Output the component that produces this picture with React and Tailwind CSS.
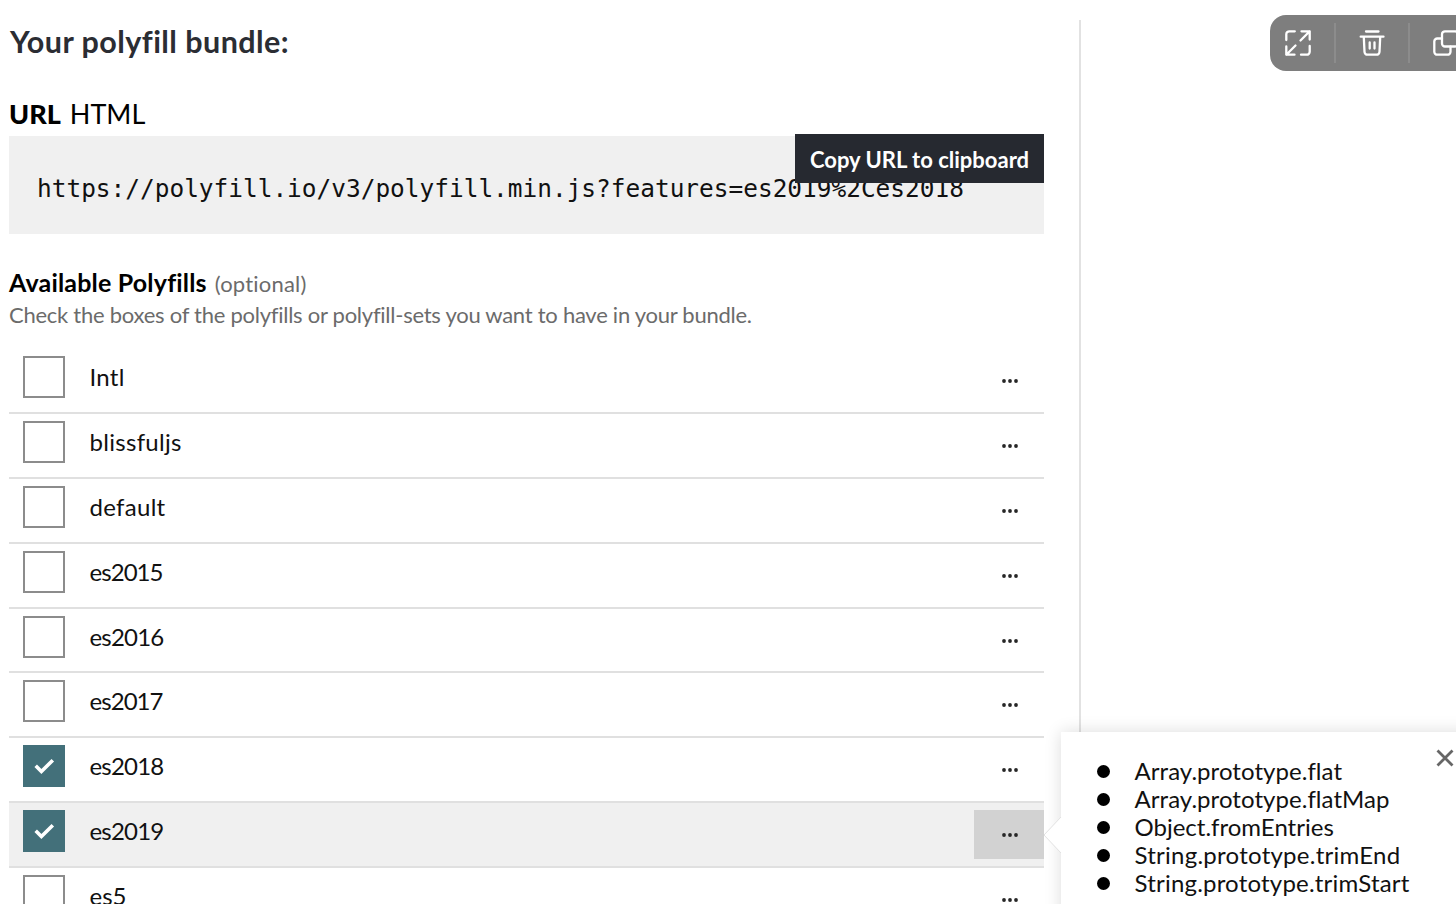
import React from "react";

const rows = [
  { name: "Intl", tracking: "tracking-[0.3px]" },
  { name: "blissfuljs", tracking: "tracking-[0.3px]" },
  { name: "default", tracking: "tracking-[0.3px]" },
  { name: "es2015", tracking: "tracking-[-0.95px]" },
  { name: "es2016", tracking: "tracking-[-0.8px]" },
  { name: "es2017", tracking: "tracking-[-0.95px]" },
  { name: "es2018", tracking: "tracking-[-0.8px]", checked: true },
  { name: "es2019", tracking: "tracking-[-0.8px]", checked: true, active: true },
  { name: "es5", tracking: "tracking-[0px]" },
];

const features = [
  { name: "Array.prototype.flat", tracking: "tracking-[0.05px]" },
  { name: "Array.prototype.flatMap", tracking: "tracking-[0.05px]" },
  { name: "Object.fromEntries", tracking: "tracking-[0px]" },
  { name: "String.prototype.trimEnd", tracking: "tracking-[0.25px]" },
  { name: "String.prototype.trimStart", tracking: "tracking-[0.2px]" },
];

function Checkbox({ checked }) {
  if (!checked) return <span className="block size-[42px] shrink-0 border-2 border-[#8c8c8c] bg-white" />;
  return (
    <span className="block size-[42px] shrink-0 bg-[#43707a]">
      <svg viewBox="0 0 42 42" className="size-full" fill="none" stroke="white" strokeWidth="3.6">
        <path d="M12.7 20.8 18.4 26.5 29.8 15.2" />
      </svg>
    </span>
  );
}

function Row({ name, tracking, checked, active }) {
  return (
    <li className={`flex h-[64.8px] shrink-0 items-start border-b-2 border-[#e0e0e0] pl-[14px] pt-[7px] ${active ? "bg-[#f0f0f0]" : ""}`}>
      <Checkbox checked={checked} />
      <span className={`ml-[24.5px] mt-[5px] text-[24px] leading-[32px] text-[#111] ${tracking}`}>{name}</span>
      <button className={`ml-auto flex h-[49px] w-[70px] items-center justify-center pl-[2px] pt-[1px] ${active ? "bg-[#d2d2d2]" : ""}`}>
        <svg width="18" height="6" viewBox="0 0 18 6" fill="#262626">
          <circle cx="3" cy="3" r="1.9" />
          <circle cx="9" cy="3" r="1.9" />
          <circle cx="15" cy="3" r="1.9" />
        </svg>
      </button>
    </li>
  );
}

function Toolbar() {
  return (
    <div className="absolute left-[1270px] top-[15px] flex h-[56px] w-[224px] items-center rounded-[16px] bg-[#7e7e7e]">
      <div className="flex w-[64px] justify-center pr-[8px]">
        <svg width="28" height="28" viewBox="0 0 28 28" fill="none" stroke="white" strokeWidth="2.3" strokeLinecap="round" strokeLinejoin="round">
          <path d="M2.300 11V5.300a3 3 0 0 1 3-3h5.500M25.700 17v5.700a3 3 0 0 1-3 3H17M17.500 2.300h8.200v8.200M25.700 2.300 16.500 11.500M10.500 25.700H2.300v-8.200M2.300 25.700l9.200-9.200" />
        </svg>
      </div>
      <div className="h-[40px] w-[2px] bg-[#8c8c8c]" />
      <div className="flex w-[72px] justify-center">
        <svg width="28" height="28" viewBox="0 0 28 28" fill="none" stroke="white" strokeWidth="2.3" strokeLinecap="round" strokeLinejoin="round">
          <path d="M8 2.500h12.500M2.700 7.700h22.800M5.800 8l.7 14.700a3 3 0 0 0 3 3h9a3 3 0 0 0 3-3l.7-14.700M11.700 13.500v6M16.500 13.500v6" />
        </svg>
      </div>
      <div className="h-[40px] w-[2px] bg-[#8c8c8c]" />
      <div className="flex w-[72px] justify-center">
        <svg width="28" height="28" viewBox="0 0 28 28" fill="none" stroke="white" strokeWidth="2.3" strokeLinecap="round" strokeLinejoin="round">
          <rect x="10" y="2.300" width="16" height="15.200" rx="3" />
          <path d="M10 9.500H5.300a3 3 0 0 0-3 3v10.200a3 3 0 0 0 3 3h10.200a3 3 0 0 0 3-3v-5" />
        </svg>
      </div>
    </div>
  );
}

function Popover() {
  return (
    <div className="absolute left-[1061px] top-[732px] h-[240px] w-[430px] bg-white shadow-[0_0_16px_rgba(0,0,0,0.14)]">
      <svg className="absolute left-[-18px] top-[83px]" width="20" height="40" viewBox="0 0 20 40">
        <path d="M20 1 18 2 1 20 18 38 20 39Z" fill="white" />
        <path d="M18 2 1 20 18 38" fill="none" stroke="#e2e2e2" />
      </svg>
      <svg className="absolute left-[375px] top-[17px]" width="18" height="18" viewBox="0 0 18 18" stroke="#666" strokeWidth="2.800">
        <path d="M1.500 1.500 16.500 16.500M16.500 1.500 1.500 16.500" />
      </svg>
      <ul className="flex flex-col pl-[36px] pt-[25px] text-[24px] leading-[28px] text-[#111]">
        {features.map((f) => (
          <li key={f.name} className="flex h-[28px] items-start">
            <span className="mr-[24.5px] mt-[7.5px] size-[13px] shrink-0 rounded-full bg-black" />
            <span className={`whitespace-nowrap ${f.tracking}`}>{f.name}</span>
          </li>
        ))}
      </ul>
    </div>
  );
}

export default function App() {
  return (
    <div className="relative flex h-[904px] w-[1456px] overflow-hidden bg-white font-['Lato',sans-serif] text-black">
      <main className="flex h-full w-[1044px] shrink-0 flex-col pl-[9px]">
        <h1 className="mt-[21px] h-[40px] shrink-0 whitespace-nowrap pl-[1px] text-[30.5px] font-bold leading-[40px] tracking-[0.45px] text-[#2b2d33]">Your polyfill bundle:</h1>
        <div className="mt-[33px] flex h-[42px] shrink-0 items-start gap-[9px] whitespace-nowrap text-[27px] leading-[40px]">
          <span className="font-black">URL</span>
          <span>HTML</span>
        </div>
        <div className="relative h-[98px] shrink-0 bg-[#f0f0f0] pl-[28px] pt-[35px]">
          <code className="block whitespace-nowrap font-['DejaVu_Sans_Mono',monospace] text-[24.450px] leading-[36px] text-[#111]">
            https://polyfill.io/v3/polyfill.min.js?features=es2019%2Ces2018
          </code>
          <button className="absolute right-0 top-[-2px] flex h-[49px] w-[249px] items-center justify-center whitespace-nowrap bg-[#262930] pt-[2px] text-[22px] font-bold text-white">
            Copy URL to clipboard
          </button>
        </div>
        <div className="mt-[32px] flex h-[33px] shrink-0 items-baseline gap-[8px] whitespace-nowrap leading-[32px]">
          <h2 className="text-[25px] font-bold tracking-[0.18px]">Available Polyfills</h2>
          <span className="text-[22px] tracking-[0.2px] text-[#6b6b6b]">(optional)</span>
        </div>
        <p className="h-[32px] shrink-0 whitespace-nowrap text-[22px] leading-[32px] tracking-[-0.26px] text-[#6b6b6b]">
          Check the boxes of the polyfills or polyfill-sets you want to have in your bundle.
        </p>
        <ul className="mt-[18.4px] flex shrink-0 flex-col">
          {rows.map((r) => (
            <Row key={r.name} {...r} />
          ))}
        </ul>
      </main>
      <div className="ml-[35px] mt-[20px] w-[2px] bg-[#e2e2e2]" />
      <Popover />
      <Toolbar />
    </div>
  );
}
